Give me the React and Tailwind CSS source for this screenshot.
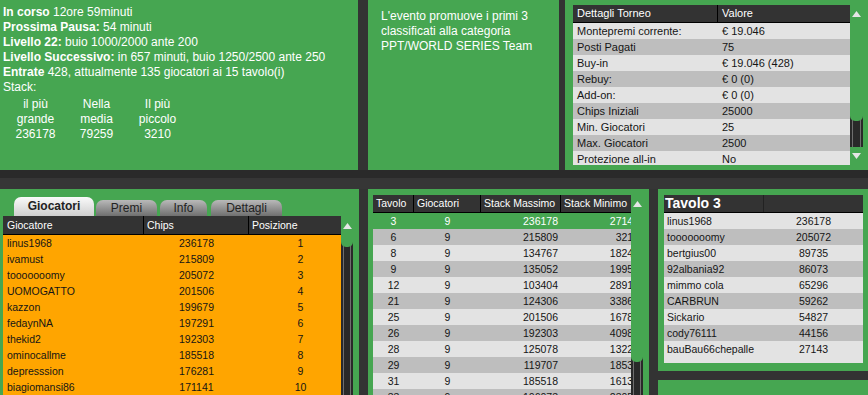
import React from 'react';

// Tournament lobby: info panels on top, players / tables / table detail below

const details = [
  ['Montepremi corrente:', '€ 19.046'],
  ['Posti Pagati', '75'],
  ['Buy-in', '€ 19.046 (428)'],
  ['Rebuy:', '€ 0 (0)'],
  ['Add-on:', '€ 0 (0)'],
  ['Chips Iniziali', '25000'],
  ['Min. Giocatori', '25'],
  ['Max. Giocatori', '2500'],
  ['Protezione all-in', 'No'],
];

const players = [
  ['linus1968', '236178', 1],
  ['ivamust', '215809', 2],
  ['tooooooomy', '205072', 3],
  ['UOMOGATTO', '201506', 4],
  ['kazzon', '199679', 5],
  ['fedaynNA', '197291', 6],
  ['thekid2', '192303', 7],
  ['ominocallme', '185518', 8],
  ['depresssion', '176281', 9],
  ['biagiomansi86', '171141', 10],
];

const tables = [
  [3, 9, '236178', '27146'],
  [6, 9, '215809', '3210'],
  [8, 9, '134767', '18245'],
  [9, 9, '135052', '19953'],
  [12, 9, '103404', '28915'],
  [21, 9, '124306', '33862'],
  [25, 9, '201506', '16784'],
  [26, 9, '192303', '40981'],
  [28, 9, '125078', '13225'],
  [29, 9, '119707', '18533'],
  [31, 9, '185518', '16130'],
  [33, 9, '106073', '23051'],
];

const seats = [
  ['linus1968', '236178'],
  ['tooooooomy', '205072'],
  ['bertgius00', '89735'],
  ['92albania92', '86073'],
  ['mimmo cola', '65296'],
  ['CARBRUN', '59262'],
  ['Sickario', '54827'],
  ['cody76111', '44156'],
  ['bauBau66chepalle', '27143'],
];

const UpArrow = () => (
  <svg width="9" height="6" viewBox="0 0 9 6">
    <polygon points="4.5,0 9,6 0,6" fill="#e6e6e6" />
  </svg>
);

const DownArrow = () => (
  <svg width="9" height="6" viewBox="0 0 9 6">
    <polygon points="0,0 9,0 4.5,6" fill="#e6e6e6" />
  </svg>
);

const ScrollBar = ({ className, headClass, thumbClass, withDown = false }) => (
  <div className={`shrink-0 flex flex-col ${className}`}>
    <div className={`flex items-center justify-center ${headClass}`}>
      <UpArrow />
    </div>
    <div className="relative flex-1 bg-[#292929]">
      <div className="absolute inset-y-0 left-[2px] w-px bg-[#6e6e6e]" />
      <div className="absolute inset-y-0 right-[2px] w-px bg-[#6e6e6e]" />
      <div className={`absolute inset-x-0 top-0 rounded-b-[5px] bg-[#46a651] ${thumbClass}`} />
    </div>
    {withDown && (
      <div className="h-[18px] flex items-center justify-center">
        <DownArrow />
      </div>
    )}
  </div>
);

const App = () => {
  return (
    <div className="w-[868px] h-[395px] overflow-hidden bg-[#333333] flex flex-col font-['Liberation_Sans',Arial,sans-serif]">
      {/* Top row */}
      <div className="flex h-[170px] shrink-0">
        {/* Tournament status */}
        <div className="w-[358px] bg-[#46a651] pl-[3px] pt-[5px] text-white text-[12px] leading-[15px]">
          <div><b>In corso</b> 12ore 59minuti</div>
          <div><b>Prossima Pausa:</b> 54 minuti</div>
          <div><b>Livello 22:</b> buio 1000/2000 ante 200</div>
          <div><b>Livello Successivo:</b> in 657 minuti, buio 1250/2500 ante 250</div>
          <div><b>Entrate</b> 428, attualmente 135 giocatori ai 15 tavolo(i)</div>
          <div>Stack:</div>
          <div className="mt-[2px] ml-[2px] grid grid-cols-[61px_61px_61px] text-center">
            <div>il più<br />grande<br />236178</div>
            <div>Nella<br />media<br />79259</div>
            <div>Il più<br />piccolo<br />3210</div>
          </div>
        </div>

        {/* Promotion note */}
        <div className="ml-[10px] w-[191px] bg-[#46a651] pl-[13px] pt-[9px] text-white text-[12px] leading-[15px]">
          L'evento promuove i primi 3<br />
          classificati alla categoria<br />
          PPT/WORLD SERIES Team
        </div>

        {/* Tournament details */}
        <div className="ml-[6px] flex-1 bg-[#46a651] pl-[8px] pr-[5px] py-[5px] flex">
          <div className="flex-1 overflow-hidden text-[11px] text-[#151515]">
            <div className="grid grid-cols-[145px_1fr] h-[18px] bg-[#333333] text-white border-b border-black">
              <div className="pl-[4px] leading-[17px] border-r border-black">Dettagli Torneo</div>
              <div className="pl-[4px] leading-[17px]">Valore</div>
            </div>
            {details.map(([label, value], i) => (
              <div
                key={label}
                className={`grid grid-cols-[145px_1fr] h-[16px] leading-[16px] ${i % 2 === 0 ? 'bg-[#e3e3e3]' : 'bg-[#bebebe]'}`}
              >
                <div className="pl-[4px]">{label}</div>
                <div className="pl-[4px]">{value}</div>
              </div>
            ))}
          </div>
          <ScrollBar className="w-[13px]" headClass="h-[18px]" thumbClass="h-[98px]" withDown />
        </div>
      </div>

      {/* Separator band */}
      <div className="h-[8px] shrink-0 bg-[#2a2a2a]" />
      <div className="h-[11px] shrink-0 bg-[#363636]" />

      {/* Bottom row */}
      <div className="flex flex-1 min-h-0">
        {/* Players with tabs */}
        <div className="w-[359px] bg-[#46a651] pt-[8px] pl-[3px] pr-[5px] flex flex-col">
          <div className="flex items-end h-[19px] ml-[11px] text-[12px] text-[#222]">
            <div className="w-[80px] h-[19px] rounded-t-[7px] bg-gradient-to-b from-[#fafafa] to-[#cfcfcf] font-bold text-center leading-[19px]">
              Giocatori
            </div>
            <div className="ml-[2px] w-[61px] h-[16px] rounded-t-[7px] bg-gradient-to-b from-[#b9b9b9] to-[#707070] text-center leading-[16px]">
              Premi
            </div>
            <div className="ml-[3px] w-[47px] h-[16px] rounded-t-[7px] bg-gradient-to-b from-[#b9b9b9] to-[#707070] text-center leading-[16px]">
              Info
            </div>
            <div className="ml-[4px] w-[71px] h-[16px] rounded-t-[7px] bg-gradient-to-b from-[#b9b9b9] to-[#707070] text-center leading-[16px]">
              Dettagli
            </div>
          </div>
          <div className="flex flex-1 min-h-0">
            <div className="w-[338px] overflow-hidden text-[10.5px] text-[#151515]">
              <div className="grid grid-cols-[141px_105px_1fr] h-[19px] bg-[#333333] text-white border-b border-black">
                <div className="pl-[4px] leading-[18px] border-r border-black">Giocatore</div>
                <div className="pl-[3px] leading-[18px] border-r border-black">Chips</div>
                <div className="pl-[3px] leading-[18px]">Posizione</div>
              </div>
              {players.map(([name, chips, pos]) => (
                <div key={name} className="grid grid-cols-[141px_105px_1fr] h-[16px] leading-[16px] bg-[#ffa500]">
                  <div className="pl-[4px]">{name}</div>
                  <div className="text-center">{chips}</div>
                  <div className="text-center pl-[11px]">{pos}</div>
                </div>
              ))}
            </div>
            <ScrollBar className="w-[12px]" headClass="h-[19px]" thumbClass="h-[12px]" />
          </div>
        </div>

        {/* Tables list */}
        <div className="ml-[9px] w-[281px] bg-[#46a651] pl-[5px] pt-[6px] pr-[6px] flex">
          <div className="w-[258px] overflow-hidden text-[10.5px] text-[#151515]">
            <div className="grid grid-cols-[41px_67px_80px_80px] w-[268px] h-[18px] bg-[#333333] text-white border-b border-black">
              <div className="pl-[3px] leading-[17px] border-r border-black">Tavolo</div>
              <div className="pl-[3px] leading-[17px] border-r border-black">Giocatori</div>
              <div className="pl-[3px] leading-[17px] border-r border-black">Stack Massimo</div>
              <div className="pl-[3px] leading-[17px]">Stack Minimo</div>
            </div>
            {tables.map(([t, g, max, min], i) => (
              <div
                key={t}
                className={`grid grid-cols-[41px_67px_80px_80px] w-[268px] h-[16px] leading-[16px] ${
                  i === 0 ? 'bg-[#46a651] text-white' : i % 2 === 1 ? 'bg-[#bebebe]' : 'bg-[#e3e3e3]'
                }`}
              >
                <div className="text-center">{t}</div>
                <div className="text-center">{g}</div>
                <div className="text-right pr-[3px]">{max}</div>
                <div className="text-right pr-[2px]">{min}</div>
              </div>
            ))}
          </div>
          <ScrollBar className="w-[12px]" headClass="h-[18px]" thumbClass="h-[149px]" />
        </div>

        {/* Selected table */}
        <div className="ml-[9px] flex-1 flex flex-col">
          <div className="h-[182px] bg-[#46a651] pl-[6px] pr-[5px] pt-[6px] pb-[8px] flex flex-col">
            <div className="grid grid-cols-[100px_1fr] h-[18px] bg-[#333333] text-white border-b border-black">
              <div className="pl-[1px] leading-[17px] text-[14px] font-bold border-r border-[#222]">Tavolo 3</div>
              <div />
            </div>
            <div className="flex-1 bg-[#e3e3e3] text-[10.5px] text-[#151515]">
              {seats.map(([name, chips], i) => (
                <div
                  key={name}
                  className={`grid grid-cols-[100px_1fr] h-[16px] leading-[16px] ${i % 2 === 0 ? 'bg-[#e3e3e3]' : 'bg-[#bebebe]'}`}
                >
                  <div className="pl-[3px]">{name}</div>
                  <div className="text-center">{chips}</div>
                </div>
              ))}
            </div>
          </div>
          <div className="mt-[9px] flex-1 bg-[#46a651]" />
        </div>
      </div>
    </div>
  );
};

export default App;
